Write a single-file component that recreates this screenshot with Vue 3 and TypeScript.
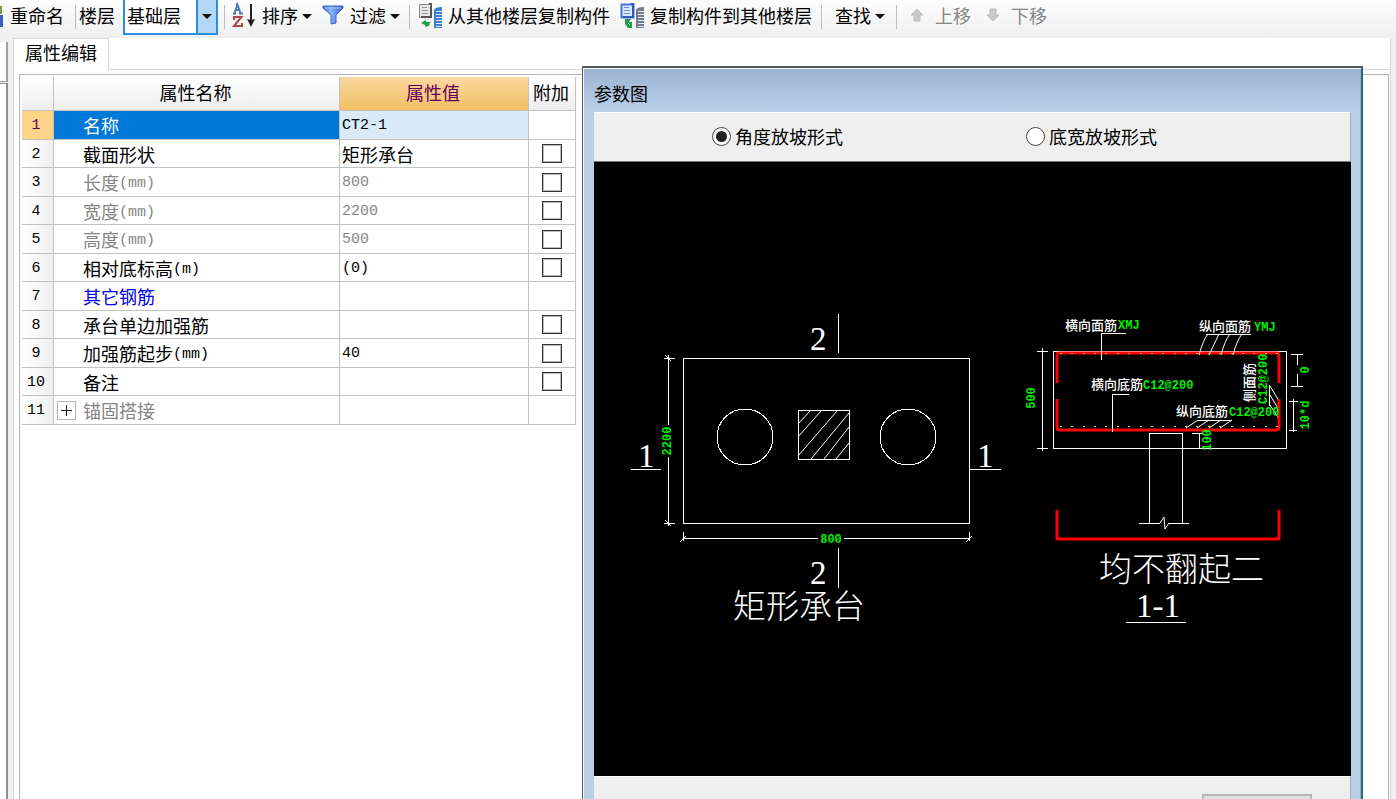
<script setup lang="ts">
import { ref } from 'vue'

interface Property {
  name: string
  unit?: string
  value?: string
  cjk?: boolean
  tone?: 'muted' | 'group'
  check?: boolean
  expand?: boolean
}

const floor = ref('基础层')
const slope = ref('angle')
const selected = ref(0)

const properties: Property[] = [
  { name: '名称', value: 'CT2-1' },
  { name: '截面形状', value: '矩形承台', cjk: true, check: true },
  { name: '长度', unit: '(mm)', value: '800', tone: 'muted', check: true },
  { name: '宽度', unit: '(mm)', value: '2200', tone: 'muted', check: true },
  { name: '高度', unit: '(mm)', value: '500', tone: 'muted', check: true },
  { name: '相对底标高', unit: '(m)', value: '(0)', check: true },
  { name: '其它钢筋', tone: 'group' },
  { name: '承台单边加强筋', check: true },
  { name: '加强筋起步', unit: '(mm)', value: '40', check: true },
  { name: '备注', check: true },
  { name: '锚固搭接', tone: 'muted', expand: true },
]

// Twenty bars spread evenly over the width of the cap
const bars = Array.from({ length: 20 }, (_, i) => Math.round(1060 + (i * 216) / 19))
</script>

<template>
  <div class="app">
    <header class="toolbar">
      <svg class="edge-icon" width="4" height="30" viewBox="0 0 4 30" aria-hidden="true">
        <path d="M0 4h2v8H0z" fill="#6fa04a" /><path d="M0 13h3v12H0z" fill="#3c62b8" />
      </svg>
      <button class="tool rename">重命名</button>
      <i class="sep"></i>
      <label class="floor-label" for="floor">楼层</label>
      <span class="combo">
        <select id="floor" v-model="floor"><option>基础层</option></select>
        <span class="drop"><i class="caret"></i></span>
      </span>
      <i class="sep after-combo"></i>
      <button class="tool sort">
        <svg width="24" height="26" viewBox="0 0 24 26" aria-hidden="true">
          <path d="M2.500 11 5.500 2.500 8.500 11M3.500 8h4M1 11.500h3M7 11.500h4M4 2h2" fill="none" stroke="#5478b4" stroke-width="1.900" />
          <path d="M2 18v-3h7.500L2 24h8v-3" fill="none" stroke="#a8484a" stroke-width="2" />
          <path d="M19 2v18" stroke="#222" stroke-width="2" /><path d="m15 17 4 8 4-8-4 1z" fill="#222" />
        </svg>
        排序<i class="caret"></i>
      </button>
      <button class="tool filter">
        <svg width="22" height="20" viewBox="0 0 22 20" aria-hidden="true">
          <defs>
            <linearGradient id="funnel" x1="0" x2="1"><stop offset="0" stop-color="#3f74de" /><stop offset=".4" stop-color="#8db4f6" /><stop offset="1" stop-color="#2f62d2" /></linearGradient>
          </defs>
          <path d="M1 1h20v2l-7 7v8l-5 1v-9L1 3z" fill="url(#funnel)" stroke="#3465cc" />
          <path d="M3 3h16" stroke="#a8c6fa" />
        </svg>
        过滤<i class="caret"></i>
      </button>
      <i class="sep wide"></i>
      <button class="tool copy">
        <svg width="25" height="26" viewBox="0 0 25 26" aria-hidden="true">
          <path d="M1.500 2.500h12v13h-12z" fill="#e6e6e6" stroke="#8b8b8b" /><path d="M10 1h4v4zM12 4h2v12H3v-2h9z" fill="#555" />
          <path d="M4 5.500h5M4 8.500h6M4 11.500h6" stroke="#999" />
          <path d="m3 21 5-3v2h5l-2 2 1 1-4 2-1-2z" fill="#1f9d45" />
          <path d="M16 26V8q1-3 8-3v21z" fill="#3f7fd2" />
          <path d="M18 9.500h7M18 12.500h7M18 15.500h7M18 18.500h7M18 21.500h7M18 24.500h7" stroke="#e4effb" />
        </svg>
        从其他楼层复制构件
      </button>
      <button class="tool copy">
        <svg width="25" height="26" viewBox="0 0 25 26" aria-hidden="true">
          <path d="M1.500 2.500h12v13h-12z" fill="#dce7ff" stroke="#4a72d6" stroke-width="2" /><path d="M10 1h4v4zM12 4h2v12H3v-2h9z" fill="#3158b8" />
          <path d="M4 5.500h5M4 8.500h6M4 11.500h6" stroke="#6c8fe0" />
          <path d="M5 17h6l-2 3h3v6H8l-3-4z" fill="#1f9d45" /><path d="M8 21l2 2" stroke="#e8f6ec" />
          <path d="M16 26V8q1-3 8-3v21z" fill="#6f7d8b" />
          <path d="M18 9.500h7M18 12.500h7M18 15.500h7M18 18.500h7M18 21.500h7M18 24.500h7" stroke="#e8ebee" />
        </svg>
        复制构件到其他楼层
      </button>
      <i class="sep"></i>
      <button class="tool find">查找<i class="caret"></i></button>
      <i class="sep wide"></i>
      <button class="tool move" disabled>
        <svg width="14" height="14" viewBox="0 0 14 14" aria-hidden="true"><path d="m7 1 6 6h-3v6H4V7H1z" fill="#c9c9c9" stroke="#bdbdbd" /></svg>
        上移
      </button>
      <button class="tool move" disabled>
        <svg width="14" height="14" viewBox="0 0 14 14" aria-hidden="true"><path d="m7 13 6-6h-3V1H4v6H1z" fill="#c9c9c9" stroke="#bdbdbd" /></svg>
        下移
      </button>
    </header>

    <div class="workspace">
      <aside class="side"><div class="side-top"></div><div class="side-body"></div></aside>
      <main class="panel">
        <div class="tabs" role="tablist"><button class="tab" role="tab" aria-selected="true">属性编辑</button><span class="tab-fill"></span></div>
        <div class="frame">
          <table>
            <colgroup><col class="c-num" /><col class="c-name" /><col class="c-value" /><col class="c-add" /></colgroup>
            <thead>
              <tr><th></th><th>属性名称</th><th class="hot">属性值</th><th>附加</th></tr>
            </thead>
            <tbody>
              <tr v-for="(p, i) in properties" :key="p.name" :class="[p.tone, { selected: selected === i }]" @click="selected = i">
                <th scope="row" class="num">{{ i + 1 }}</th>
                <td>
                  <div class="name">
                    <span class="slot"><button v-if="p.expand" class="plus" :aria-label="p.name"><svg width="11" height="11" viewBox="0 0 11 11"><path d="M0 5.500h11M5.500 0v11" stroke="#222" stroke-width="1" shape-rendering="crispEdges" /></svg></button></span>{{ p.name }}<span v-if="p.unit" class="latin unit">{{ p.unit }}</span>
                  </div>
                </td>
                <td class="value" :class="{ latin: !p.cjk }">{{ p.value }}</td>
                <td class="add"><input v-if="p.check" type="checkbox" :aria-label="p.name" /></td>
              </tr>
            </tbody>
          </table>
        </div>
      </main>
    </div>

    <section class="dialog" role="dialog" aria-labelledby="dialog-title">
      <h2 id="dialog-title">参数图</h2>
      <div class="content">
        <div class="modes">
          <label><input v-model="slope" type="radio" name="slope" value="angle" />角度放坡形式</label>
          <label><input v-model="slope" type="radio" name="slope" value="width" />底宽放坡形式</label>
        </div>
        <svg class="drawing" viewBox="594 162 757 614" role="img" aria-label="矩形承台">
          <g class="line">
            <path d="M683 358H969V523H683Z" />
            <circle cx="745" cy="437" r="28" /><circle cx="908" cy="437" r="28" />
            <path d="M798 410H849V459H798Z" />
            <path class="slant" d="M798 424l12-13M798 437l23-26M798 456l39-45M811 459l38-46M824 459l25-32M836 459l13-16" />
            <path d="M838 314V353M838 548V588M631 469H661M969 469H1001" />
            <path d="M668 355V425M668 457V526M664 358H675M664 523H675M683 538H818M844 538H969M683 532V541M969 532V541" />
            <path class="slant" d="M665 355l6 6M665 520l6 6M680 542l6-6M966 542l6-6" />

            <path d="M1053 351H1286V448H1053Z" />
            <path d="M1042 348V451M1037 351H1048M1037 448H1048" />
            <path d="M1206 334H1251M1198 420H1232" />
            <path d="M1269 385V406" /><path class="slant" d="M1270 386l9 15M1270 395l9 15M1270 405l9 14" />
            <path d="M1149 523V433H1182V523M1139 523H1160M1168 523H1189" />
            <path class="slant" d="M1160 523l4-6 1 12 4-6" />
            <path d="M1192 433H1202M1199 433V449M1194 448H1202" />
            <path d="M1291 354H1303M1297 354V365M1297 374V387M1291 386H1303M1293 399V432M1289 401H1298M1289 430H1297" />
          </g>
          <g class="rebar">
            <path d="M1057 383V355q0-2 2-2H1277q2 0 2 2V383" />
            <path d="M1057 399V427q0 3 3 3H1276q3 0 3-3V399" />
            <path d="M1057 510V539H1279V510" />
          </g>
          <g class="dots">
            <template v-for="x in bars" :key="x">
              <rect :x="x" y="353" width="2" height="1" /><rect :x="x" y="426" width="2" height="1" />
            </template>
          </g>
          <g class="line">
            <path d="M1126 333H1101V360M1129 394H1112V432" />
            <path class="slant" d="M1208 334q-5 6-9 21M1219 334l-10 21M1230 334q-5 6-9 21M1242 334q-5 6-9 21M1198 420l-12 8M1209 420l-12 8M1221 420l-12 8M1232 420l-12 8" />
          </g>
          <g class="mark">
            <text x="810" y="350">2</text><text x="810" y="584">2</text>
            <text x="638" y="467">1</text><text x="977" y="467">1</text>
            <text x="1158" y="617" text-anchor="middle">1-1</text>
            <text class="title" x="733" y="618">矩形承台</text>
            <text class="title" x="1099" y="581">均不翻起二</text>
          </g>
          <path class="under" d="M1126 622H1186" />
          <g class="note">
            <text x="1065" y="330">横向面筋</text><text x="1199" y="331">纵向面筋</text>
            <text x="1091" y="389">横向底筋</text><text x="1176" y="416">纵向底筋</text>
            <text transform="translate(1254 402) rotate(-90)">侧面筋</text>
          </g>
          <g class="dim">
            <text x="1118" y="329">XMJ</text><text x="1254" y="331">YMJ</text>
            <text x="1143" y="389">C12@200</text><text x="1229" y="416">C12@200</text>
            <text x="831" y="543" text-anchor="middle">800</text>
            <text transform="translate(671 441) rotate(-90)" text-anchor="middle">2200</text>
            <text transform="translate(1035 398) rotate(-90)" text-anchor="middle">500</text>
            <text transform="translate(1267 404) rotate(-90)">C12@200</text>
            <text transform="translate(1211 440) rotate(-90)" text-anchor="middle">100</text>
            <text transform="translate(1309 370) rotate(-90)" text-anchor="middle">0</text>
            <text transform="translate(1309 415) rotate(-90)" text-anchor="middle">10*d</text>
          </g>
        </svg>
        <footer><button class="confirm" aria-label="确定"></button></footer>
      </div>
    </section>
  </div>
</template>

<style>
html, body { margin: 0; overflow: hidden; }
</style>

<style scoped>
* { box-sizing: border-box; }
.app {
  position: relative; display: flex; flex-direction: column; height: 100vh; overflow: hidden;
  background: #f0f0f0; color: #000; font: 18px/24px "Noto Sans CJK SC", sans-serif;
}
button, select, input { font: inherit; color: inherit; margin: 0; }
button { padding: 0; border: 0; background: none; }
.latin, .num { font-family: "Liberation Mono", monospace; font-size: 15px; font-weight: 400; }

.toolbar { display: flex; flex: none; align-items: center; height: 38px; padding-bottom: 5px; background: linear-gradient(#fdfdfd, #efefef); white-space: nowrap; }
.toolbar svg { flex: none; }
.tool, .floor-label { display: flex; align-items: center; padding-bottom: 4px; }
.rename { margin: 0 11px 0 6px; }
.sep { width: 1px; height: 24px; background: #bdbdbd; }
.floor-label { margin: 0 8px 0 3px; }
.combo { position: relative; display: block; align-self: flex-start; width: 95px; height: 35px; }
.combo select { width: 100%; height: 100%; padding: 0 0 4px 2px; appearance: none; border: 2px solid #2a8ee0; border-top: 0; border-radius: 0; background: #fff; outline: 0; }
.drop { position: absolute; top: 0; right: 0; bottom: 0; display: flex; align-items: center; justify-content: center; width: 22px; border: 2px solid #2a8ee0; border-top: 0; background: #b3d6f2; pointer-events: none; }
.caret { width: 0; height: 0; border: 5px solid transparent; border-top-color: #111; border-bottom: 0; }
.tool .caret { margin: 4px 0 0 4px; }
.after-combo { margin: 0 7px 0 6px; }
.sort { margin-right: 10px; }
.sort svg { margin-right: 6px; }
.filter svg { margin-right: 6px; }
.wide { margin-left: 9px; }
.copy { margin-left: 8px; }
.copy + .copy { margin-left: 10px; }
.copy svg { margin-right: 5px; }
.copy + .sep { margin: 0 13px 0 9px; }
.find { margin-right: 2px; }
.move { margin-left: 13px; color: #858585; }
.move + .move { margin-left: 15px; }
.move svg { margin-right: 11px; }

.workspace { display: flex; flex: 1; min-height: 0; padding-right: 5px; }
.side { display: flex; flex: none; flex-direction: column; width: 8px; margin: 4px 5px 0 0; }
.side-top, .side-body { border-right: 2px solid #8f9096; background: #fff; }
.side-top { height: 40px; border-bottom: 1px solid #8f9096; border-color: #a0a0a4; }
.side-body { flex: 1; margin-top: 1px; border-top: 1px solid #8f9096; }
.panel { display: flex; flex: 1; flex-direction: column; min-width: 0; border-right: 1px solid #d8d8d8; border-left: 1px solid #d8d8d8; background: #fff; }
.tabs { display: flex; height: 32px; }
.tab { width: 95px; padding-bottom: 5px; border-top: 1px solid #d8d8d8; border-right: 1px solid #d8d8d8; line-height: 24px; }
.tab-fill { flex: 1; border-bottom: 1px solid #d8d8d8; }
.frame { flex: 1; margin: 4px 1px 0 5px; padding: 2px 0 0 2px; border: 1px solid #b4b4ba; border-bottom: 0; }

table { width: 554px; border-spacing: 0; table-layout: fixed; }
.c-num { width: 32px; }
.c-name { width: 286px; }
.c-value { width: 189px; }
.c-add { width: 47px; }
th, td { padding: 0; border-right: 1px solid #c2c2c2; border-bottom: 1px solid #c2c2c2; white-space: nowrap; }
thead th { height: 34px; padding: 0 2px 3px 0; background: linear-gradient(#fff, #ededed); font-weight: 400; }
thead .hot { background: linear-gradient(#fad8a0, #f1c064); color: #64005c; }
tbody tr { height: 28px; line-height: 24px; }
tbody tr:nth-child(odd) { height: 29px; }
.num { padding: 2px 3px 0 0; background: linear-gradient(90deg, #fff, #efefef); }
.name { display: flex; align-items: center; }
.slot { display: flex; width: 29px; padding-left: 3px; }
.unit { padding-top: 3px; line-height: 21px; }
.plus { display: flex; align-items: center; justify-content: center; width: 19px; height: 19px; border: 1px solid #b5b5b5; background: #fff; }
.value { padding-left: 2px; }
.value.latin { padding-top: 2px; }
.muted td { color: #858585; }
.group td { color: #0000f5; }
.selected .num { background: #ffd48a; color: #64005c; }
.selected td:nth-child(2) { background: #0078d7; color: #fff; }
.selected .value { background: #d9eaf8; }
.add input { display: block; width: 20px; height: 19px; margin: 0 auto; appearance: none; border: 1px solid #333; background: #fff; box-shadow: inset 0 0 0 1px #bbb; }

.dialog {
  position: absolute; top: 66px; right: 33px; bottom: 0; left: 582px; display: flex; flex-direction: column;
  padding: 0 10px 0 9px; border: solid #55585c; border-width: 2px 2px 0 1px;
  box-shadow: inset 1px 1px #f5f8fb, inset -1px 0 #4fd0ec; background: linear-gradient(#9ab3d0, #b9d0e9 44px);
}
h2 { height: 44px; margin: 0; padding: 13px 0 0 2px; font-size: 18px; font-weight: 400; line-height: 24px; }
.content { display: flex; flex: 1; flex-direction: column; min-height: 0; margin-left: 2px; background: #efefef; }
.modes { display: grid; flex: none; grid-template-columns: 314px 1fr; height: 50px; padding-left: 118px; border: solid #fff; border-width: 1px 0 0; border-right: 1px solid #aaa; border-bottom: 1px solid #777; }
.modes label { display: flex; align-items: center; gap: 4px; padding-bottom: 2px; }
.modes input { display: grid; width: 19px; height: 19px; place-items: center; appearance: none; border: 1px solid #444; border-radius: 50%; background: #fff; }
.modes input:checked::before { content: ""; width: 11px; height: 11px; border-radius: 50%; background: #222; }
.drawing { display: block; flex: 1; width: 100%; min-height: 0; background: #000; }
footer { flex: none; height: 23px; padding: 17px 38px 0 0; overflow: hidden; border-top: 1px solid #fff; border-right: 1px solid #aaa; }
.confirm { display: block; width: 110px; height: 32px; margin-left: auto; border: 2px solid #b4b4b4; background: #e1e1e1; }

.line, .under { fill: none; stroke: #fff; stroke-width: 1; shape-rendering: crispEdges; }
.slant { shape-rendering: auto; }
.rebar { fill: none; stroke: #f00; stroke-width: 3; stroke-linejoin: round; }
.dots { fill: #d8d800; }
.mark { fill: #fff; font-family: "Liberation Serif", serif; font-size: 33px; }
.title { font-family: "Noto Sans CJK SC", sans-serif; font-weight: 300; }
.note { fill: #fff; font-size: 13px; font-weight: 500; }
.dim { fill: #00f000; font-family: "Liberation Mono", monospace; font-size: 12px; font-weight: 700; }
</style>
